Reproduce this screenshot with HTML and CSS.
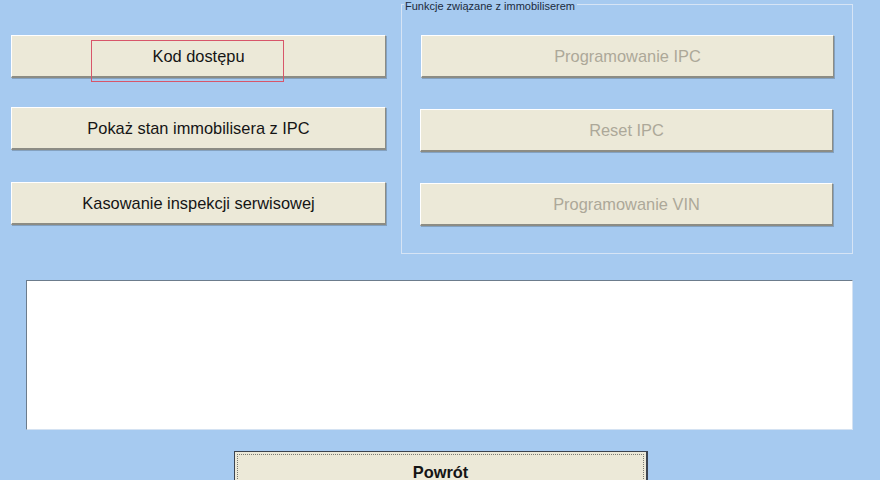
FILE: index.html
```html
<!DOCTYPE html>
<html lang="pl">
<head>
<meta charset="utf-8">
<title>Immobiliser</title>
<link rel="stylesheet" href="styles.css">
</head>
<body>
<div class="screen">
  <div class="top">
    <div class="left-col">
      <div class="slot">
        <button class="btn">Kod dostępu</button>
        <span class="focus-ring"></span>
      </div>
      <button class="btn">Pokaż stan immobilisera z IPC</button>
      <button class="btn">Kasowanie inspekcji serwisowej</button>
    </div>
    <div class="group">
      <span class="legend">Funkcje związane z immobiliserem</span>
      <button class="btn disabled" disabled>Programowanie IPC</button>
      <button class="btn disabled" disabled>Reset IPC</button>
      <button class="btn disabled" disabled>Programowanie VIN</button>
    </div>
  </div>
  <div class="output"></div>
  <div class="footer">
    <button class="btn default"><span class="dotted">Powrót</span></button>
  </div>
</div>
</body>
</html>
```

FILE: styles.css
```css
html, body {
  margin: 0;
  padding: 0;
  background: #a6caf0;
  overflow: hidden;
}

.screen {
  width: 880px;
  height: 480px;
  font-family: "Liberation Sans", Arial, sans-serif;
}

.top {
  display: flex;
  align-items: flex-start;
}

.left-col {
  margin-left: 11px;
  padding-top: 35px;
  width: 375px;
  display: flex;
  flex-direction: column;
  gap: 29px;
}

.left-col > .btn:last-child {
  margin-top: 3px;
}

.slot {
  position: relative;
}

.btn {
  position: relative;
  box-sizing: border-box;
  display: block;
  height: 43px;
  width: 100%;
  margin: 0;
  padding: 0;
  background: #ece9d8;
  border-style: solid;
  border-width: 1px 1px 2px 1px;
  border-color: #ffffff #8c8c84 #8c8c84 #ffffff;
  box-shadow: 1px 1px 0 rgba(90, 110, 130, 0.45);
  font-family: "Liberation Sans", Arial, sans-serif;
  font-size: 16.4px;
  color: #151515;
  text-align: center;
}

.btn.disabled {
  color: #aca899;
}

.focus-ring {
  position: absolute;
  z-index: 2;
  left: 80px;
  top: 5px;
  width: 193px;
  height: 42px;
  box-sizing: border-box;
  border: 1px solid #d8566a;
  pointer-events: none;
}

.group {
  position: relative;
  box-sizing: border-box;
  margin-left: 15px;
  margin-top: 4px;
  width: 452px;
  height: 250px;
  border: 1px solid #d6e4f5;
  padding: 30px 19px 0 18px;
  display: flex;
  flex-direction: column;
  gap: 31px;
}

.group .btn:first-of-type {
  margin-left: 1px;
}

.legend {
  position: absolute;
  left: 2px;
  top: -5px;
  padding: 0 2px 0 1px;
  background: #a6caf0;
  font-size: 11px;
  line-height: 12px;
  color: #1c2a3c;
}

.output {
  box-sizing: border-box;
  margin: 26px 0 0 26px;
  width: 827px;
  height: 150px;
  background: #ffffff;
  border-style: solid;
  border-width: 1px;
  border-color: #6c7c8c #d4e2f2 #d4e2f2 #6c7c8c;
}

.footer {
  margin: 21px 0 0 234px;
  width: 414px;
}

.btn.default {
  border: 1px solid #3c4450;
  border-right-width: 2px;
  box-shadow: none;
  padding: 2px;
  font-weight: bold;
}

.dotted {
  display: flex;
  align-items: center;
  justify-content: center;
  box-sizing: border-box;
  height: 100%;
  border: 1px dotted #7a7a72;
}
```
